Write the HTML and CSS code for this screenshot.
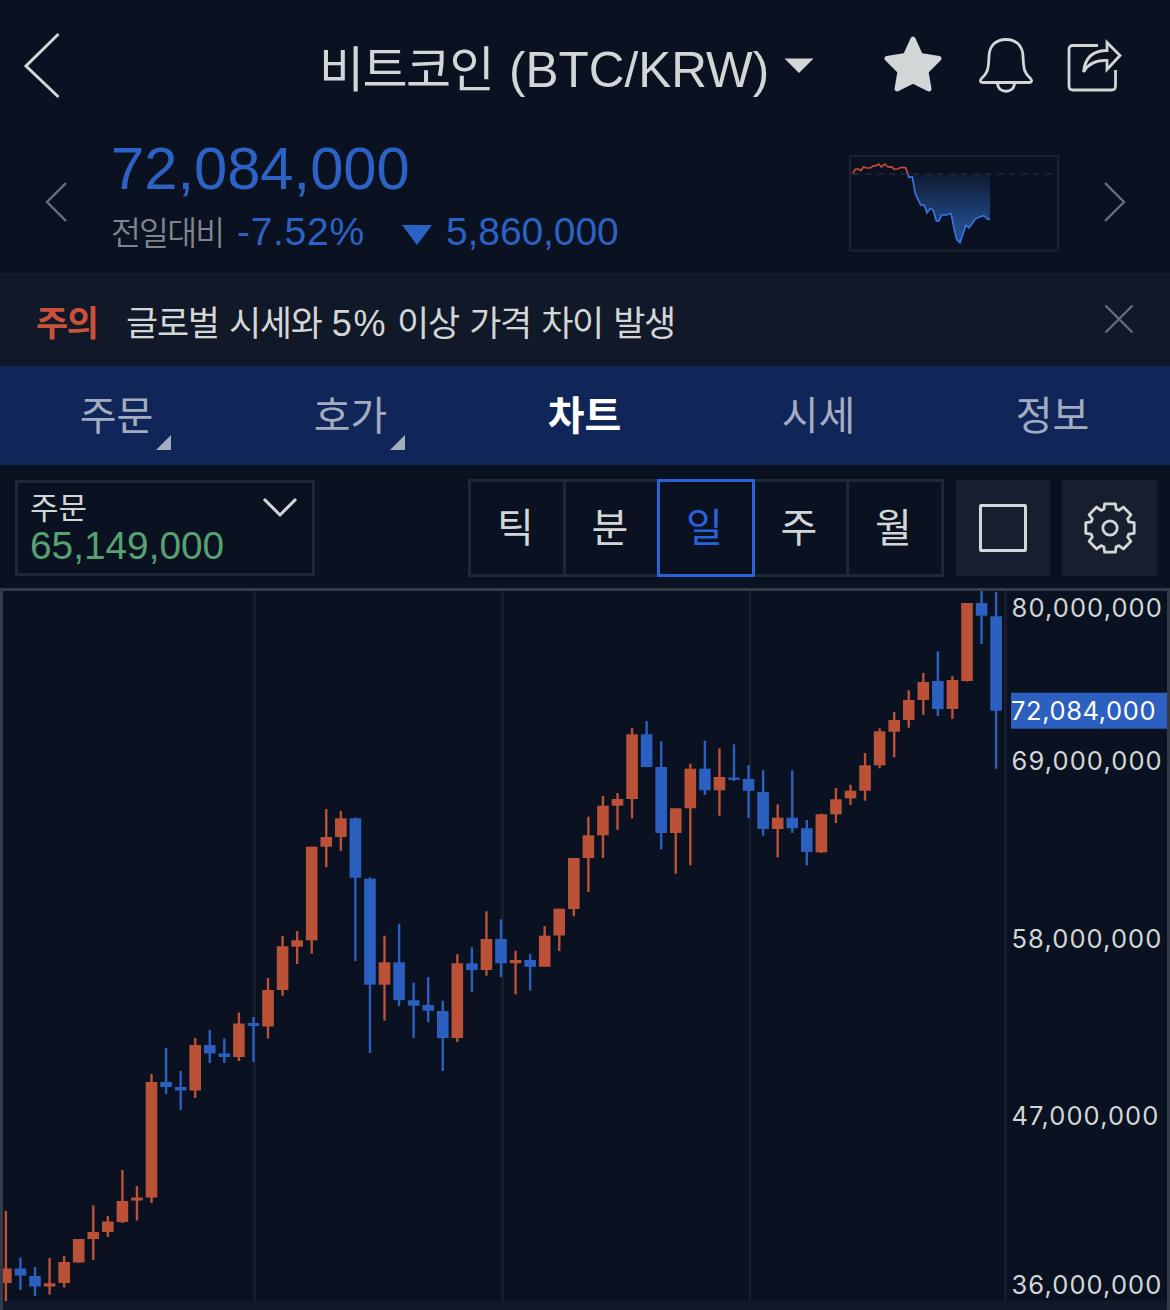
FILE: index.html
```
<!DOCTYPE html>
<html lang="ko">
<head>
    <meta charset="UTF-8">
    <meta name="viewport" content="width=device-width, initial-scale=1.0">
    <title>비트코인 (BTC/KRW)</title>
    <link rel="stylesheet" href="styles.css">
</head>
<body>
    <div class="app">
        <div class="header">
            <svg class="back" width="38" height="68" viewBox="0 0 38 68"><path d="M35.5 2 L3 34 L35.5 65"/></svg>
            <div class="title"><span class="ko">비트코인</span><span class="pair">(BTC/KRW)</span></div>
            <svg class="caret" width="30" height="16" viewBox="0 0 30 16"><path d="M0.5 0.5 H29.5 L15 15 Z"/></svg>
            <svg class="star" width="58" height="56" viewBox="0 0 58 56"><path d="M29 3 L36.5 19.5 L55 22.5 L42 35.5 L45 53 L29 45 L13 53 L16 35.5 L3 22.5 L21.5 19.5 Z"/></svg>
            <svg class="bell" width="54" height="56" viewBox="0 0 54 56">
                <path d="M27 2.5 C17 2.5 10.5 8.500 10 19 C9.500 33 8.500 36 2.500 41.500 C0.500 44 1.500 45.500 4 45.500 H50 C52.500 45.500 53.500 44 51.500 41.500 C45.500 36 44.500 33 44 19 C43.500 8.500 37 2.500 27 2.500 Z"/>
                <path d="M18.500 46 C18.500 57 35.500 57 35.500 46"/>
            </svg>
            <svg class="share" width="56" height="56" viewBox="0 0 56 56">
                <path d="M31 7.500 H6 Q2 7.500 2 11.500 V48 Q2 52 6 52 H44.500 Q48.500 52 48.500 48 V32"/>
                <path d="M16.500 34 C18 20 26 12.500 40 12.500 V4.500 L53 17.500 L40 31.500 V22.500 C28 22 21 26 16.500 34 Z"/>
            </svg>
        </div>

        <div class="ticker">
            <svg class="arrow" width="24" height="42" viewBox="0 0 24 42"><path d="M22 2 L3 21 L22 40"/></svg>
            <div class="price">
                <div class="now">72,084,000</div>
                <div class="change">
                    <span class="label">전일대비</span>
                    <span class="rate">-7.52%</span>
                    <svg class="down" width="30" height="20" viewBox="0 0 30 20"><path d="M0 0 H30 L15 20 Z"/></svg>
                    <span class="diff">5,860,000</span>
                </div>
            </div>
            <svg class="mini" width="210" height="97" viewBox="27 30 630 291">
                <defs>
                    <linearGradient id="fall" x1="0" y1="0" x2="0" y2="1">
                        <stop offset="0" stop-color="#2a60b0" stop-opacity="0.12"/>
                        <stop offset="0.6" stop-color="#2a60b0" stop-opacity="0.6"/>
                        <stop offset="1" stop-color="#2a60b0" stop-opacity="0.85"/>
                    </linearGradient>
                </defs>
                <rect class="frame" x="30" y="33" width="624" height="284"/>
                <path class="base" d="M40 87 H635"/>
                <path fill="url(#fall)" d="M204 88 L206 97 217 96 226 146 242 180 253 181 261 204 271 190 280 196 289 228 297 228 305 210 320 210 333 205 342 250 350 284 360 293 378 240 387 249 405 223 418 216 432 212 442 222 450 223 V88 Z"/>
                <path class="up" d="M38 86 L46 73 56 72 63 77 70 66 80 69 92 69 98 63 106 63 116 57 124 66 134 57 144 66 154 65 163 73 172 72 184 67 197 68 204 88"/>
                <path class="dn" d="M204 88 L206 97 217 96 226 146 242 180 253 181 261 204 271 190 280 196 289 228 297 228 305 210 320 210 333 205 342 250 350 284 360 293 378 240 387 249 405 223 418 216 432 212 442 222 450 223"/>
            </svg>
            <svg class="arrow next" width="24" height="42" viewBox="0 0 24 42"><path d="M2 2 L21 21 L2 40"/></svg>
        </div>

        <div class="notice">
            <b>주의</b>
            <span class="msg">글로벌 시세와 <span class="num">5%</span> 이상 가격 차이 발생</span>
            <svg class="close" width="30" height="30" viewBox="0 0 30 30"><path d="M1.500 1.500 L28.500 28.500 M28.500 1.500 L1.500 28.500"/></svg>
        </div>

        <div class="tabs">
            <div class="tab more">주문</div>
            <div class="tab more">호가</div>
            <div class="tab on">차트</div>
            <div class="tab">시세</div>
            <div class="tab">정보</div>
        </div>

        <div class="toolbar">
            <div class="order">
                <div class="name">주문</div>
                <div class="value">65,149,000</div>
                <svg class="open" width="36" height="21" viewBox="0 0 36 21"><path d="M2 2 L18 18 L34 2"/></svg>
            </div>
            <div class="period">
                <div class="tick">틱</div>
                <div class="minute">분</div>
                <div class="on">일</div>
                <div class="week">주</div>
                <div class="month">월</div>
            </div>
            <div class="tool"><div class="square"></div></div>
            <div class="tool last">
                <svg id="gear" width="54" height="54" viewBox="-27 -27 54 54"><circle r="7.200"/></svg>
            </div>
        </div>

        <div class="chart">
            <svg id="candles" width="1164" height="719" viewBox="3 591 1164 719"></svg>
        </div>
    </div>

    <script type="text/javascript">
        var NS = "http://www.w3.org/2000/svg";
        var svg = document.getElementById("candles");

        function add(parent, tag, attrs, text)
        {
            var el = document.createElementNS(NS, tag);
            for(var k in attrs) el.setAttribute(k, attrs[k]);
            if(text) el.textContent = text;
            parent.appendChild(el);
        }

        // [상승 1 / 하락 0, 고가, 몸통 위, 몸통 아래, 저가]
        var data = [
            [1,1211,1268.5,1283,1301], [0,1257.5,1268.5,1275.5,1290], [0,1267,1276,1286.5,1296],
            [1,1258,1283.3,1286.5,1294.5], [1,1256,1262,1283,1287.5], [1,1239,1239,1262.5,1262.5],
            [1,1205.5,1232,1239,1260], [1,1216,1221.5,1232,1237], [1,1170,1201,1222,1223],
            [1,1186,1197.5,1200.5,1220.5], [1,1074,1082,1197.5,1203], [0,1048,1082,1087,1094],
            [0,1071,1087,1090.5,1110], [1,1038,1045,1090.5,1098], [0,1030,1045,1053.5,1063],
            [0,1038.5,1053.5,1057,1063], [1,1012.5,1023.5,1057,1061], [0,1017,1023,1026,1062],
            [1,978,990,1026.5,1038.5], [1,936,946.3,990,995.7], [1,931,940.3,946.7,964],
            [1,846.7,846.7,940.3,953.7], [1,809,837,846.7,867.3], [1,811,818.3,837,851],
            [0,817.3,818.3,877.7,961], [0,877.5,878.7,984.7,1053], [1,935.7,962.3,984.7,1020.7],
            [0,923.7,962.3,1000,1006], [0,982.7,1000.3,1005.7,1038], [0,977,1005,1010.7,1022.3],
            [0,1000.7,1011,1038,1071], [1,954.3,963.3,1038,1042], [0,947.3,963.3,970,992],
            [1,911.3,939,970,975.7], [0,919.3,939,963.3,977], [1,950.7,960,963.3,994.3],
            [0,954,960,966.7,990.7], [1,926,935.7,966.7,966.7], [1,908.7,908.7,935.5,951],
            [1,858,858,909,916.3], [1,816.7,835.3,858,892], [1,796,805.7,835.3,858],
            [1,793,799,805.7,829.7], [1,728,734.3,799,818.3], [0,721,734.3,767,767],
            [0,741.3,767,833,849.3], [1,808.3,808.3,833,873.7], [1,763.7,768.7,808.3,865.3],
            [0,740.7,768.7,790.3,795], [1,748.3,777,790.3,815.7], [0,744.3,777.5,779.8,781],
            [0,765,779,790.7,818], [0,770.3,792,829,835.7], [1,804.3,817.7,829,857.3],
            [0,770.3,817.7,828.3,833], [0,820,828.3,852,865.3], [1,813.7,814.3,852.3,853],
            [1,788,799.3,814.3,823], [1,784.7,790.7,798.3,805], [1,753,765.3,790.7,800.7],
            [1,728.3,731.3,765.3,768.3], [1,712,720,731.7,757.3], [1,690.3,700,720,727.7],
            [1,673,682,700,715], [0,651.3,681,709,716], [1,676,680,709,719],
            [1,603,603,681,681.5], [0,590,603,615.7,644], [0,592,616.3,710.7,768.7]
        ];

        //눈금선
        add(svg, "rect", {x: 3, y: 1301, width: 1164, height: 9, "class": "foot"});
        [254.5, 502.5, 750, 1005.5].forEach(function(x){
            add(svg, "rect", {x: x - 1.25, y: 591, width: 2.5, height: 710, "class": "grid"});
        });

        //캔들
        data.forEach(function(d, i){
            var x = 5.9 + i * 14.562;
            var cls = d[0] ? "rise" : "fall";
            add(svg, "rect", {x: x - 1.2, y: d[1], width: 2.4, height: d[4] - d[1], "class": cls});
            add(svg, "rect", {x: x - 5.8, y: d[2], width: 11.6, height: d[3] - d[2], "class": cls});
        });

        //가격축
        add(svg, "rect", {x: 1011, y: 692.7, width: 156, height: 36, "class": "tag"});
        add(svg, "text", {x: 1011.5, y: 617, "class": "axis"}, "80,000,000");
        add(svg, "text", {x: 1011.5, y: 770, "class": "axis"}, "69,000,000");
        add(svg, "text", {x: 1011.5, y: 948, "class": "axis"}, "58,000,000");
        add(svg, "text", {x: 1011.5, y: 1125, "class": "axis"}, "47,000,000");
        add(svg, "text", {x: 1011.5, y: 1294, "class": "axis"}, "36,000,000");
        add(svg, "text", {x: 1011, y: 720, "class": "axis cur"}, "72,084,000");

        //톱니 8개
        var pts = [];
        for(var i = 0; i < 8; i++)
        {
            [[-18, 19.8], [-12.5, 24.8], [12.5, 24.8], [18, 19.8]].forEach(function(p){
                var a = (i * 45 + p[0]) * Math.PI / 180;
                pts.push((p[1] * Math.sin(a)).toFixed(2) + "," + (-p[1] * Math.cos(a)).toFixed(2));
            });
        }
        add(document.getElementById("gear"), "polygon", {points: pts.join(" ")});
    </script>
</body>
</html>
```
FILE: styles.css
```
*{
    margin: 0;
    padding: 0;
    box-sizing: border-box;
}
body{
    background: #0a1120;
    color: #d3d6d6;
    font-family: "Liberation Sans", "Noto Sans CJK KR", sans-serif;
}
svg{
    display: block;
    flex: none;
    fill: none;
}
.app{
    width: 1170px;
    height: 1310px;
    overflow: hidden;
    white-space: nowrap;
}

/* 상단 */
.header{
    display: flex;
    align-items: center;
    height: 132px;
    padding-left: 23px;
}
.header svg{
    stroke: #d3d6d6;
    stroke-width: 3;
}
.header .title{
    display: flex;
    align-items: baseline;
    width: 454px;
    margin-left: 258px;
    font-size: 49.5px;
    line-height: 72px;
    padding-top: 4px;
}
.title .ko{
    width: 190px;
    font-family: "Noto Sans CJK KR", sans-serif;
    font-size: 49px;
    letter-spacing: -1.6px;
}
.header .caret{
    margin-left: 11px;
    fill: #d3d6d6;
    stroke: none;
}
.header .star{
    margin-left: 70px;
    margin-top: -4px;
    fill: #d3d6d6;
    stroke-width: 5;
    stroke-linejoin: round;
}
.header .bell{
    margin-left: 37px;
    margin-top: -2px;
}
.header .share{
    margin-left: 34px;
}
.header .bell, .header .share{
    stroke-width: 2.8;
}

/* 현재가 */
.ticker{
    display: flex;
    height: 142px;
    padding-left: 44px;
    border-bottom: 1px solid #141b2b;
}
.arrow{
    margin-top: 49px;
    stroke: #6b717b;
    stroke-width: 2.4;
}
.arrow.next{
    margin-left: 44px;
}
.price{
    width: 738px;
    margin-left: 43px;
    color: #2c62c4;
}
.price .now{
    font-size: 59.7px;
    line-height: 74px;
}
.price .change{
    display: flex;
    align-items: baseline;
    font-size: 39px;
    line-height: 50px;
}
.change .label{
    width: 126px;
    font-family: "Noto Sans CJK KR", sans-serif;
    font-weight: 350;
    font-size: 32.5px;
    letter-spacing: -1.8px;
    color: #80858d;
}
.change .rate{
    width: 165px;
    letter-spacing: 0.7px;
}
.change .diff{
    letter-spacing: -0.1px;
}
.change .down{
    fill: #2c62c4;
    margin-right: 14px;
}
.mini{
    margin-top: 23px;
}
.mini .frame{
    stroke: #1c2232;
    stroke-width: 6;
}
.mini .base{
    stroke: #252b38;
    stroke-width: 4;
    stroke-dasharray: 18 18;
}
.mini .up{
    stroke: #d04a38;
    stroke-width: 5;
}
.mini .dn{
    stroke: #3876de;
    stroke-width: 5;
}

/* 주의 */
.notice{
    display: flex;
    align-items: center;
    height: 92px;
    padding: 0 36px;
    background: #111828;
    font-size: 35px;
}
.notice b{
    width: 90px;
    color: #c8523a;
    letter-spacing: -1.5px;
}
.notice .msg{
    letter-spacing: -1.3px;
    word-spacing: 1.8px;
}
.notice .num{
    font-size: 36px;
    letter-spacing: 1.5px;
}
.notice .close{
    margin-left: auto;
    margin-top: -2px;
    stroke: #686d77;
    stroke-width: 2.4;
}

/* 탭 */
.tabs{
    display: flex;
    height: 99px;
    background: #112658;
}
.tab{
    position: relative;
    flex: 1;
    text-align: center;
    text-indent: -1px;
    font-size: 40px;
    line-height: 100px;
    color: #a3acc0;
}
.tab.on{
    color: #fff;
    font-weight: bold;
}
.tab.more:after{
    content: "";
    position: absolute;
    left: 156px;
    top: 69px;
    border-left: 15px solid transparent;
    border-bottom: 15px solid #a3acc0;
}

/* 차트 도구 */
.toolbar{
    display: flex;
    align-items: flex-start;
    height: 123px;
    padding: 12px 13px 0 15px;
}
.order{
    position: relative;
    width: 300px;
    height: 96px;
    margin-top: 3px;
    border: 3px solid #212737;
    padding: 7px 12px;
}
.order .name{
    font-size: 31px;
    line-height: 38px;
}
.order .value{
    font-size: 38.8px;
    line-height: 36px;
    color: #58a171;
}
.order .open{
    position: absolute;
    right: 14px;
    top: 14px;
    stroke: #d3d6d6;
    stroke-width: 3;
}
.period{
    display: flex;
    width: 476px;
    height: 98px;
    margin-left: 153px;
    margin-top: 2px;
    font-size: 40px;
    text-align: center;
    text-indent: -3px;
    line-height: 93px;
}
.period div{
    border: 3px solid #212737;
}
.period .tick{
    width: 98px;
}
.period .minute{
    width: 91px;
    border-left: 0;
    border-right: 0;
}
.period .on{
    width: 98px;
    color: #2b62dc;
    border-color: #2b62dc;
}
.period .week{
    width: 94px;
    border-left: 0;
}
.period .month{
    width: 95px;
    border-left: 0;
}
.tool{
    display: flex;
    align-items: center;
    justify-content: center;
    width: 94px;
    height: 96px;
    margin-left: 12px;
    margin-top: 3px;
    background: #171e2e;
}
.tool.last{
    width: 95px;
}
.tool .square{
    width: 48px;
    height: 48px;
    border: 3px solid #d3d6d6;
    border-radius: 2px;
}
#gear{
    margin-top: -1px;
    stroke: #d3d6d6;
    stroke-width: 2.8;
    stroke-linejoin: round;
}

/* 차트 */
.chart{
    height: 722px;
    border: 3px solid #343b47;
    border-bottom: 0;
}
.chart .grid{
    fill: #191f2f;
}
.chart .foot{
    fill: #11182a;
}
.chart .rise{
    fill: #bb5238;
}
.chart .fall, .chart .tag{
    fill: #2c60c0;
}
.chart .axis{
    font-family: Inter, "Liberation Sans", sans-serif;
    font-size: 25.5px;
    letter-spacing: 1.1px;
    fill: #d3d6d6;
}
.chart .cur{
    fill: #fff;
    letter-spacing: 0.6px;
}
```
